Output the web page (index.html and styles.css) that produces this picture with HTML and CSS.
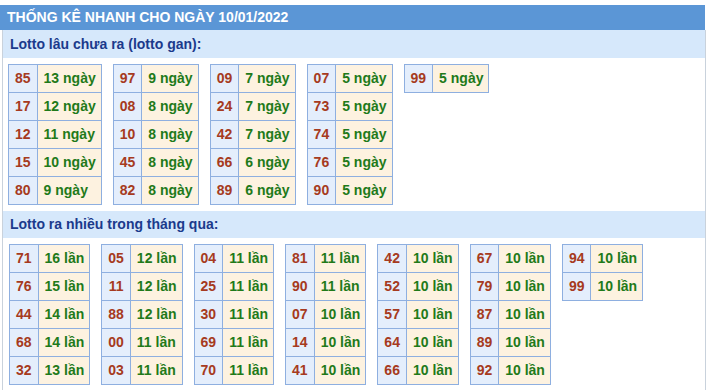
FILE: index.html
```html
<!DOCTYPE html>
<html lang="vi">
<head>
<meta charset="utf-8">
<title>Thống kê nhanh</title>
<link rel="stylesheet" href="styles.css">
</head>
<body>
<div class="box">
  <div class="title">THỐNG KÊ NHANH CHO NGÀY 10/01/2022</div>
  <div class="body">
    <div class="sub">Lotto lâu chưa ra (lotto gan):</div>
    <div class="tables t1">
      <table><tr><td class="n">85</td><td class="v">13 ngày</td></tr><tr><td class="n">17</td><td class="v">12 ngày</td></tr><tr><td class="n">12</td><td class="v">11 ngày</td></tr><tr><td class="n">15</td><td class="v">10 ngày</td></tr><tr><td class="n">80</td><td class="v">9 ngày</td></tr></table>
      <table><tr><td class="n">97</td><td class="v">9 ngày</td></tr><tr><td class="n">08</td><td class="v">8 ngày</td></tr><tr><td class="n">10</td><td class="v">8 ngày</td></tr><tr><td class="n">45</td><td class="v">8 ngày</td></tr><tr><td class="n">82</td><td class="v">8 ngày</td></tr></table>
      <table><tr><td class="n">09</td><td class="v">7 ngày</td></tr><tr><td class="n">24</td><td class="v">7 ngày</td></tr><tr><td class="n">42</td><td class="v">7 ngày</td></tr><tr><td class="n">66</td><td class="v">6 ngày</td></tr><tr><td class="n">89</td><td class="v">6 ngày</td></tr></table>
      <table><tr><td class="n">07</td><td class="v">5 ngày</td></tr><tr><td class="n">73</td><td class="v">5 ngày</td></tr><tr><td class="n">74</td><td class="v">5 ngày</td></tr><tr><td class="n">76</td><td class="v">5 ngày</td></tr><tr><td class="n">90</td><td class="v">5 ngày</td></tr></table>
      <table><tr><td class="n">99</td><td class="v">5 ngày</td></tr></table>
    </div>
    <div class="sub sub2">Lotto ra nhiều trong tháng qua:</div>
    <div class="tables t2">
      <table><tr><td class="n">71</td><td class="v">16 lần</td></tr><tr><td class="n">76</td><td class="v">15 lần</td></tr><tr><td class="n">44</td><td class="v">14 lần</td></tr><tr><td class="n">68</td><td class="v">14 lần</td></tr><tr><td class="n">32</td><td class="v">13 lần</td></tr></table>
      <table><tr><td class="n">05</td><td class="v">12 lần</td></tr><tr><td class="n">11</td><td class="v">12 lần</td></tr><tr><td class="n">88</td><td class="v">12 lần</td></tr><tr><td class="n">00</td><td class="v">11 lần</td></tr><tr><td class="n">03</td><td class="v">11 lần</td></tr></table>
      <table><tr><td class="n">04</td><td class="v">11 lần</td></tr><tr><td class="n">25</td><td class="v">11 lần</td></tr><tr><td class="n">30</td><td class="v">11 lần</td></tr><tr><td class="n">69</td><td class="v">11 lần</td></tr><tr><td class="n">70</td><td class="v">11 lần</td></tr></table>
      <table><tr><td class="n">81</td><td class="v">11 lần</td></tr><tr><td class="n">90</td><td class="v">11 lần</td></tr><tr><td class="n">07</td><td class="v">10 lần</td></tr><tr><td class="n">14</td><td class="v">10 lần</td></tr><tr><td class="n">41</td><td class="v">10 lần</td></tr></table>
      <table><tr><td class="n">42</td><td class="v">10 lần</td></tr><tr><td class="n">52</td><td class="v">10 lần</td></tr><tr><td class="n">57</td><td class="v">10 lần</td></tr><tr><td class="n">64</td><td class="v">10 lần</td></tr><tr><td class="n">66</td><td class="v">10 lần</td></tr></table>
      <table><tr><td class="n">67</td><td class="v">10 lần</td></tr><tr><td class="n">79</td><td class="v">10 lần</td></tr><tr><td class="n">87</td><td class="v">10 lần</td></tr><tr><td class="n">89</td><td class="v">10 lần</td></tr><tr><td class="n">92</td><td class="v">10 lần</td></tr></table>
      <table><tr><td class="n">94</td><td class="v">10 lần</td></tr><tr><td class="n">99</td><td class="v">10 lần</td></tr></table>
    </div>
  </div>
</div>
</body>
</html>
```
FILE: styles.css
```css
html, body {
  margin: 0;
  padding: 0;
  background: #ffffff;
}
body {
  font-family: "Liberation Sans", Arial, sans-serif;
  font-size: 14px;
  padding-top: 5px;
}
.box {
  width: 706px;
}
.title {
  height: 25px;
  line-height: 25px;
  background: #5b96d6;
  color: #ffffff;
  font-weight: bold;
  font-size: 14px;
  padding-left: 7px;
  width: 698px;
}
.body {
  margin-left: 2px;
  width: 702px;
  border-left: 1px solid #c9d2dc;
  border-right: 1px solid #c9d2dc;
  padding-bottom: 20px;
}
.sub {
  height: 28px;
  line-height: 28px;
  background: #d6e8fb;
  color: #1b3a8c;
  font-weight: bold;
  font-size: 14px;
  padding-left: 7px;
}
.sub2 {
  height: 27px;
  line-height: 27px;
}
.tables {
  display: flex;
  align-items: flex-start;
  gap: 11px;
  padding: 6px 0 6px 5px;
}
.t2 {
  padding-left: 6px;
}
table {
  border-collapse: collapse;
}
td {
  border: 1px solid #8eafe0;
  height: 27px;
  padding: 0 6px;
  font-weight: bold;
  font-size: 14px;
  line-height: 27px;
  white-space: nowrap;
}
td.n {
  background: #e4eefc;
  color: #a63a20;
  text-align: center;
}
td.v {
  background: #fdf2e0;
  color: #1f7a1a;
  padding: 0 5px 0 6px;
}
```
